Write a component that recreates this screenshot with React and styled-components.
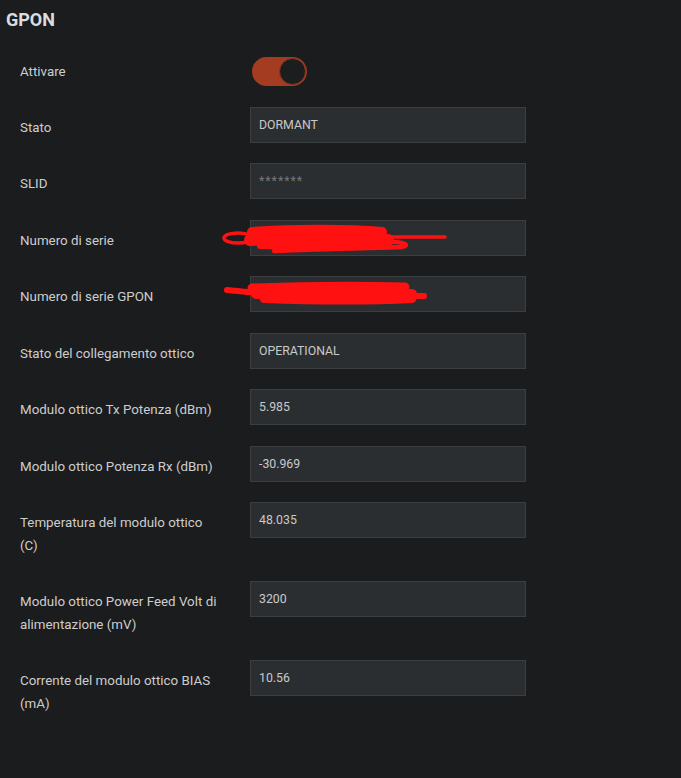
import React from 'react';
import styled, { createGlobalStyle } from 'styled-components';

const GlobalStyle = createGlobalStyle`
  html, body {
    margin: 0;
    padding: 0;
    background: #1b1c1e;
  }
  body {
    font-family: Roboto, "Liberation Sans", Arial, sans-serif;
    -webkit-font-smoothing: antialiased;
  }
`;

const Page = styled.div`
  width: 681px;
  min-height: 778px;
  box-sizing: border-box;
  background: #1b1c1e;
  padding-top: 9px;
`;

const Title = styled.h2`
  margin: 0 0 19.6px 6px;
  font-size: 18px;
  line-height: 22px;
  font-weight: 700;
  color: #dcdcdc;
`;

const Form = styled.div`
  display: flex;
  flex-direction: column;
  gap: 13.83px;
  padding-left: 20px;
`;

const Row = styled.div`
  position: relative;
  display: grid;
  grid-template-columns: 230px 276px;
  align-items: ${(p) => (p.$center ? 'center' : 'start')};
`;

const Label = styled.div`
  box-sizing: border-box;
  padding: 10px 30px 10px 0;
  font-size: 13.35px;
  line-height: 22.6px;
  color: #cdcdcd;
`;

const Field = styled.div`
  box-sizing: border-box;
  height: 36px;
  display: flex;
  align-items: center;
  padding: 0 8px;
  background: #2b2e31;
  border: 1px solid #3b3e41;
  font-size: 12.3px;
  color: ${(p) => (p.$placeholder ? '#74777a' : '#c9c9c9')};
  letter-spacing: ${(p) => (p.$placeholder ? '1px' : '0')};
`;

const Toggle = styled.div`
  box-sizing: border-box;
  margin-left: 2px;
  width: 55px;
  height: 29px;
  border-radius: 15px;
  background: #a33c21;
  display: flex;
  justify-content: flex-end;
  align-items: center;
  padding-right: 1px;
`;

const Knob = styled.div`
  width: 27px;
  height: 27px;
  border-radius: 50%;
  background: #1c1d1f;
  box-sizing: border-box;
  border: 1px solid #8a3520;
`;

const Scribble = styled.svg`
  position: absolute;
  left: 0;
  top: 0;
  width: 506px;
  height: 36px;
  overflow: visible;
  pointer-events: none;
`;

const RED = '#ff1111';

const ScribbleOne = () => (
  <Scribble viewBox="0 0 506 36">
    <g fill="none" stroke={RED} strokeLinecap="round" strokeLinejoin="round">
      <ellipse cx="218" cy="18" rx="14" ry="5" strokeWidth="3.5" />
      <path d="M232 12 C 270 9, 330 9, 362 12" strokeWidth="10" />
      <path d="M230 20 C 280 18, 330 18, 368 20" strokeWidth="12" />
      <path d="M240 26 C 280 27, 330 27, 360 26" strokeWidth="6" />
      <path d="M300 17 L 425 17" strokeWidth="3.5" />
      <path d="M254 31 C 300 29, 350 28, 382 27 C 392 25, 382 21, 362 22" strokeWidth="4.5" />
    </g>
  </Scribble>
);

const ScribbleTwo = () => (
  <Scribble viewBox="0 0 506 36">
    <g fill="none" stroke={RED} strokeLinecap="round" strokeLinejoin="round">
      <path d="M207 14 C 220 15, 235 17, 245 18" strokeWidth="6" />
      <path d="M232 12 C 290 10, 340 10, 385 11" strokeWidth="9" />
      <path d="M236 18 C 290 17, 340 17, 392 18" strokeWidth="10" />
      <path d="M244 23 C 300 25, 350 25, 392 23" strokeWidth="8" />
      <path d="M370 20 L 404 20" strokeWidth="6" />
    </g>
  </Scribble>
);

const rows = [
  { label: 'Stato', value: 'DORMANT' },
  { label: 'SLID', value: '*******', placeholder: true },
  { label: 'Numero di serie', value: '', scribble: ScribbleOne },
  { label: 'Numero di serie GPON', value: '', scribble: ScribbleTwo },
  { label: 'Stato del collegamento ottico', value: 'OPERATIONAL' },
  { label: 'Modulo ottico Tx Potenza (dBm)', value: '5.985' },
  { label: 'Modulo ottico Potenza Rx (dBm)', value: '-30.969' },
  { label: 'Temperatura del modulo ottico (C)', value: '48.035' },
  { label: 'Modulo ottico Power Feed Volt di alimentazione (mV)', value: '3200' },
  { label: 'Corrente del modulo ottico BIAS (mA)', value: '10.56' },
];

export default function App() {
  return (
    <Page>
      <GlobalStyle />
      <Title>GPON</Title>
      <Form>
        <Row $center>
          <Label>Attivare</Label>
          <Toggle>
            <Knob />
          </Toggle>
        </Row>
        {rows.map((r) => {
          const Mark = r.scribble;
          return (
            <Row key={r.label}>
              <Label>{r.label}</Label>
              <Field $placeholder={r.placeholder}>{r.value}</Field>
              {Mark ? <Mark /> : null}
            </Row>
          );
        })}
      </Form>
    </Page>
  );
}
